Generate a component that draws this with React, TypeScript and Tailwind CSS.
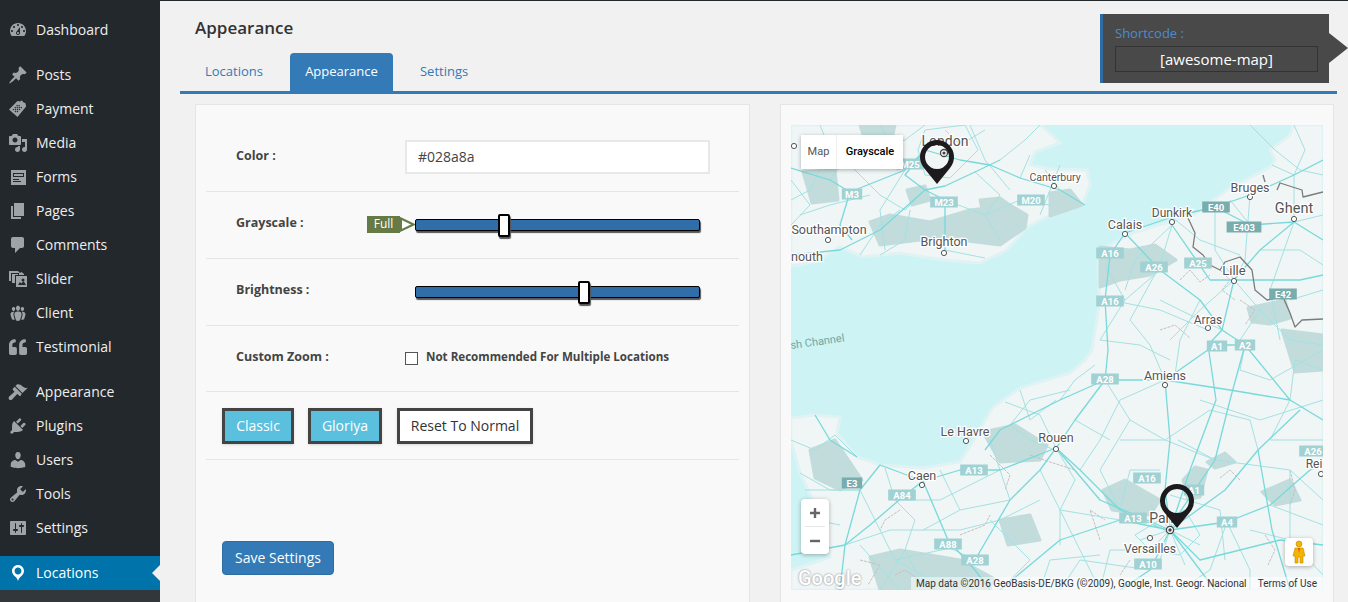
import { FaQuoteLeft } from "react-icons/fa";

type IconProps = { className?: string };

const icon = (d: string) =>
  function Icon({ className = "" }: IconProps) {
    return (
      <svg viewBox="0 0 20 20" className={`h-5 w-5 fill-current ${className}`}>
        <path fillRule="evenodd" d={d} />
      </svg>
    );
  };

const DashboardIcon = icon(
  "M3.76 16h12.48c1.1-1.37 1.76-3.11 1.76-5 0-4.42-3.58-8-8-8s-8 3.58-8 8c0 1.89.66 3.63 1.76 5zM10 4c.55 0 1 .45 1 1s-.45 1-1 1-1-.45-1-1 .45-1 1-1zM6 6c.55 0 1 .45 1 1s-.45 1-1 1-1-.45-1-1 .45-1 1-1zm8 0c.55 0 1 .45 1 1s-.45 1-1 1-1-.45-1-1 .45-1 1-1zm-5.37 5.55L12 7v6c0 1.1-.9 2-2 2s-2-.9-2-2c0-.57.24-1.08.63-1.45zM4 10c.55 0 1 .45 1 1s-.45 1-1 1-1-.45-1-1 .45-1 1-1zm12 0c.55 0 1 .45 1 1s-.45 1-1 1-1-.45-1-1 .45-1 1-1zm-5 3c0-.55-.45-1-1-1s-1 .45-1 1 .45 1 1 1 1-.45 1-1z",
);
const PostsIcon = icon(
  "M10.44 3.02l1.82-1.82 6.36 6.35-1.83 1.82c-1.05-.68-2.48-.57-3.41.36l-.75.75c-.92.93-1.04 2.35-.35 3.41l-1.83 1.82-2.41-2.41-2.8 2.79c-.42.42-3.38 2.71-3.8 2.29s1.86-3.39 2.28-3.81l2.79-2.79L4.1 9.36l1.83-1.82c1.05.69 2.48.57 3.4-.36l.75-.75c.93-.92 1.05-2.35.36-3.41z",
);
const PaymentIcon = icon(
  "M1 10.5 9.5 2l3 .4.6-.9 1.6.4.2 1.1 2.6 1.2.6 3.3L9.5 18zM8.2 6.6l.9-.9.9.9-.9.9zm2 0 .9-.9.9.9-.9.9zM6.4 8.6l.9-.9.9.9-.9.9zm2 0 .9-.9.9.9-.9.9zm2 0 .9-.9.9.9-.9.9zm2 0 .9-.9.9.9-.9.9zM4.6 10.6l.9-.9.9.9-.9.9zm2 0 .9-.9.9.9-.9.9zm2 0 .9-.9.9.9-.9.9zm2 0 .9-.9.9.9-.9.9zm-4 2 .9-.9.9.9-.9.9zm2 0 .9-.9.9.9-.9.9z",
);
const MediaIcon = icon(
  "M13 11V4c0-.55-.45-1-1-1h-1.67L9 1H5L3.67 3H2c-.55 0-1 .45-1 1v7c0 .55.45 1 1 1h10c.55 0 1-.45 1-1zM7 4.5c1.38 0 2.5 1.12 2.5 2.5S8.38 9.5 7 9.5 4.5 8.38 4.5 7 5.62 4.5 7 4.5zM14 6h5v10.5c0 1.38-1.12 2.5-2.5 2.5S14 17.88 14 16.5s1.12-2.5 2.5-2.5c.17 0 .34.02.5.05V9h-3V6zm-4 8.05V13h2v3.5c0 1.38-1.12 2.5-2.5 2.5S7 17.88 7 16.5 8.12 14 9.5 14c.17 0 .34.02.5.05z",
);
const FormsIcon = icon(
  "M3 3h15v15H3zM5 6v4h11V6zm1 1h9v2H6zM5 12v1h6v-1zm0 2v1h8v-1z",
);
const PagesIcon = icon("M6 15V2h10v13H6zm-1 1h8v2H3V5h2v11z");
const CommentsIcon = icon(
  "M5 2h9c1.1 0 2 .9 2 2v7c0 1.1-.9 2-2 2h-2l-5 5v-5H5c-1.1 0-2-.9-2-2V4c0-1.1.9-2 2-2z",
);
const SliderIcon = icon(
  "M1 2h9l2 2 1.5-1L16 5v1h-5V4H3v8H1zm3 3h6v1H7v8H4zm4 2h11v11H8zm2 9h8l-2.5-4-2 2.5-1.5-1.5zm5-6.5a1.5 1.5 0 1 0 0 3 1.5 1.5 0 0 0 0-3z",
);
const ClientIcon = icon(
  "M8.03 4.46c-.29 1.28.55 3.46 1.97 3.46 1.41 0 2.25-2.18 1.96-3.46-.22-.98-1.08-1.63-1.96-1.63-.89 0-1.74.65-1.97 1.63zm-4.13.9c-.25 1.08.47 2.93 1.66 2.93 1.2 0 1.92-1.85 1.67-2.93-.19-.83-.92-1.39-1.67-1.39s-1.48.56-1.66 1.39zm8.86 0c-.25 1.08.47 2.93 1.66 2.93 1.2 0 1.92-1.85 1.66-2.93-.19-.83-.92-1.39-1.66-1.39-.75 0-1.48.56-1.66 1.39zm-.59 11.43l1.25-4.3C14.2 10 12.71 8.47 10 8.47c-2.72 0-4.21 1.53-3.44 4.02l1.26 4.3C8.05 17.51 9 18 10 18c.98 0 1.94-.49 2.17-1.21zm-6.1-7.63c-.49.67-.96 1.83-.42 3.59l1.12 3.79c-.34.2-.77.31-1.2.31-.85 0-1.65-.41-1.85-1.03l-1.07-3.65c-.65-2.11.61-3.4 2.92-3.4.27 0 .54.02.79.06-.1.1-.2.22-.29.33zm8.35-.39c2.31 0 3.58 1.29 2.92 3.4l-1.07 3.65c-.2.62-1 1.03-1.85 1.03-.43 0-.86-.11-1.2-.31l1.11-3.77c.55-1.78.08-2.94-.42-3.61-.08-.11-.18-.23-.28-.33.25-.04.51-.06.79-.06z",
);
const AppearanceIcon = icon(
  "M14.48 11.06L7.41 3.99l1.5-1.5c.5-.56 2.3-.47 3.51.32 1.21.8 1.43 1.28 2.91 2.1 1.18.64 2.45 1.26 4.45.85zm-.71.71L6.7 4.7 4.93 6.47c-.39.39-.39 1.02 0 1.41l1.06 1.06c.39.39.39 1.03 0 1.42L1.2 14.5c-.8.8-.8 2.1 0 2.9s2.1.8 2.9 0l4.6-4.8c.39-.39 1.03-.39 1.42 0l1.06 1.06c.39.39 1.02.39 1.41 0z",
);
const PluginsIcon = icon(
  "M13.11 4.36L9.87 7.6 8 5.73l3.24-3.24c.35-.34 1.05-.2 1.56.32.52.51.66 1.21.31 1.55zm-8 1.77l.91-1.12 9.01 9.01-1.19.84c-.71.71-2.63 1.16-3.82 1.16H6.14L4.9 17.26c-.59.59-1.54.59-2.12 0-.59-.58-.59-1.53 0-2.12l1.24-1.24v-3.88c0-1.13.4-3.19 1.09-3.89zm7.26 3.97l3.24-3.24c.34-.35 1.04-.21 1.55.31.52.51.66 1.21.31 1.55l-3.24 3.25z",
);
const UsersIcon = icon(
  "M10 9.25c-2.27 0-2.73-3.44-2.73-3.44C7 4.02 7.82 2 9.97 2c2.16 0 2.98 2.02 2.71 3.81 0 0-.41 3.44-2.68 3.44zm0 2.57L12.72 10c2.39 0 4.52 2.33 4.52 4.53v2.49s-3.65 1.13-7.24 1.13c-3.65 0-7.24-1.13-7.24-1.13v-2.49c0-2.25 1.94-4.48 4.47-4.48z",
);
const ToolsIcon = icon(
  "M16.68 9.77c-1.34 1.34-3.3 1.67-4.95.99l-5.41 6.52c-.99.99-2.59.99-3.58 0s-.99-2.59 0-3.57l6.52-5.42c-.68-1.65-.35-3.61.99-4.95 1.28-1.28 3.12-1.62 4.72-1.06l-2.89 2.89 2.82 2.82 2.86-2.87c.53 1.58.18 3.39-1.08 4.65zM3.81 16.21c.4.39 1.04.39 1.43 0 .4-.4.4-1.04 0-1.43-.39-.4-1.03-.4-1.43 0-.39.39-.39 1.03 0 1.43z",
);
const SettingsIcon = icon(
  "M18 16V4c0-.55-.45-1-1-1H3c-.55 0-1 .45-1 1v12c0 .55.45 1 1 1h14c.55 0 1-.45 1-1zM8 11h1c.55 0 1 .45 1 1s-.45 1-1 1H8v1.5c0 .28-.22.5-.5.5s-.5-.22-.5-.5V13H6c-.55 0-1-.45-1-1s.45-1 1-1h1V5.5c0-.28.22-.5.5-.5s.5.22.5.5V11zm5-2h-1c-.55 0-1-.45-1-1s.45-1 1-1h1V5.5c0-.28.22-.5.5-.5s.5.22.5.5V7h1c.55 0 1 .45 1 1s-.45 1-1 1h-1v5.5c0 .28-.22.5-.5.5s-.5-.22-.5-.5V9z",
);
const LocationIcon = icon(
  "M10 2C6.69 2 4 4.69 4 8c0 2.02 1.17 3.71 2.53 4.89.43.37 1.18.96 1.85 1.83.74.97 1.24 2.21 1.62 3.28.38-1.07.88-2.31 1.62-3.28.67-.87 1.42-1.46 1.85-1.83C14.83 11.71 16 10.02 16 8c0-3.31-2.69-6-6-6zm0 2.56c1.9 0 3.44 1.54 3.44 3.44S11.9 11.44 10 11.44 6.56 9.9 6.56 8 8.1 4.56 10 4.56z",
);
const QuoteIcon = ({ className = "" }: IconProps) => <FaQuoteLeft className={`h-[18px] w-[20px] ${className}`} />;

const menuGroups = [
  [{ label: "Dashboard", Icon: DashboardIcon }],
  [
    { label: "Posts", Icon: PostsIcon },
    { label: "Payment", Icon: PaymentIcon },
    { label: "Media", Icon: MediaIcon },
    { label: "Forms", Icon: FormsIcon },
    { label: "Pages", Icon: PagesIcon },
    { label: "Comments", Icon: CommentsIcon },
    { label: "Slider", Icon: SliderIcon },
    { label: "Client", Icon: ClientIcon },
    { label: "Testimonial", Icon: QuoteIcon },
  ],
  [
    { label: "Appearance", Icon: AppearanceIcon },
    { label: "Plugins", Icon: PluginsIcon },
    { label: "Users", Icon: UsersIcon },
    { label: "Tools", Icon: ToolsIcon },
    { label: "Settings", Icon: SettingsIcon },
  ],
];

function Sidebar() {
  return (
    <aside className="flex w-40 shrink-0 flex-col gap-[11px] bg-[#23282d] pt-[13px] text-sm text-[#eeeeee]">
      {menuGroups.map((group, i) => (
        <ul key={i}>
          {group.map(({ label, Icon }) => (
            <li key={label} className="flex h-[34px] items-center gap-2 pl-2">
              <Icon className="text-[#9ea3a8]" />
              <span>{label}</span>
            </li>
          ))}
        </ul>
      ))}
      <div className="relative flex h-[34px] items-center gap-2 bg-[#0073aa] pl-2 text-white">
        <LocationIcon className="text-white" />
        <span>Locations</span>
        <span className="absolute right-0 top-[9px] border-y-8 border-r-8 border-y-transparent border-r-[#f1f1f1]" />
      </div>
      <div className="-mt-[11px] flex-1 bg-[#32373c]" />
    </aside>
  );
}

function Slider({ value, tip }: { value: number; tip?: string }) {
  return (
    <div className="relative ml-[179px] h-3 w-[285px] rounded-[2px] border border-black bg-[#2f6ea8] shadow-[1px_2px_1px_#555]">
      <div
        className="absolute -top-[6px] h-[23px] w-3 -translate-x-1/2 rounded-[2px] border-2 border-black bg-white shadow-[1px_2px_1px_#555]"
        style={{ left: `${value}%` }}
      />
      {tip && (
        <div className="absolute -left-[49px] -top-[4px] flex h-[17px] w-[33px] items-center justify-center bg-[#667a45] text-xs text-white">
          {tip}
          <svg viewBox="0 0 15 15" className="absolute -right-[15px] top-[1px] h-[15px] w-[15px]">
            <path d="M1 1.5 13.5 7.5 1 13.5z" fill="#fff" stroke="#667a45" strokeWidth="2" />
          </svg>
        </div>
      )}
    </div>
  );
}

function Row({
  label,
  labelClass,
  children,
  height,
}: {
  label: string;
  labelClass: string;
  children: React.ReactNode;
  height: string;
}) {
  return (
    <div className={`relative flex items-center border-b border-[#e5e5e5] pl-[30px] ${height}`}>
      <label className={`absolute text-[12.5px] font-bold text-[#444444] ${labelClass}`}>{label}</label>
      {children}
    </div>
  );
}

function SettingsPanel() {
  return (
    <section className="border border-[#e5e5e5] bg-[#f9f9f9] px-[10px] pt-[10px]">
      <Row label="Color :" labelClass="mt-[6px]" height="h-[77px]">
        <div className="ml-[169px] mt-[8px] flex h-[34px] w-[305px] items-center border-2 border-[#e8e8e8] bg-white pl-[11px] text-sm text-[#444444]">
          #028a8a
        </div>
      </Row>
      <Row label="Grayscale :" labelClass="mb-[4px]" height="h-[67px]">
        <div className="-mt-[1px]">
          <Slider value={31} tip="Full" />
        </div>
      </Row>
      <Row label="Brightness :" labelClass="mb-[4px]" height="h-[67px]">
        <div className="-mt-[1px]">
          <Slider value={59.5} />
        </div>
      </Row>
      <Row label="Custom Zoom :" labelClass="mb-[2px]" height="h-[66px]">
        <div className="ml-[169px] -mt-[3px] flex items-center gap-2">
          <span className="mt-1 h-[13px] w-[13px] border border-[#555555] bg-white" />
          <span className="text-[11.6px] font-bold text-[#444444]">Not Recommended For Multiple Locations</span>
        </div>
      </Row>
      <div className="flex h-[68px] items-center gap-[14px] border-b border-[#e5e5e5] pl-4 text-sm">
        <button className="h-9 w-[72px] border-[3px] border-[#444444] bg-[#5bc0de] text-white shadow-sm">Classic</button>
        <button className="h-9 w-[74px] border-[3px] border-[#444444] bg-[#5bc0de] text-white shadow-sm">Gloriya</button>
        <button className="ml-px h-9 w-[136px] border-[3px] border-[#444444] bg-white text-[#333333] shadow-sm">
          Reset To Normal
        </button>
      </div>
      <div className="pb-[60px] pl-4 pt-[81px]">
        <button className="h-[34px] w-28 rounded border border-[#2e6da4] bg-[#337ab7] text-sm text-white">
          Save Settings
        </button>
      </div>
    </section>
  );
}

const land = [
  "M791,125 L1040,125 L1052,135 L1060,143 L1035,152 L1030,165 L1050,169 L1087,170 L1090,185 L1083,203 L1070,210 L1047,217 L1027,227 L1007,250 L980,263 L943,260 L900,253 L863,257 L840,247 L815,262 L791,266 Z",
  "M1293,125 L1290,135 L1270,150 L1275,160 L1270,167 L1227,190 L1193,215 L1133,233 L1100,250 L1098,267 L1100,300 L1092,350 L1085,360 L1070,373 L1020,388 L993,407 L985,420 L977,435 L960,462 L923,468 L880,465 L857,457 L837,433 L840,417 L813,415 L791,418 L791,440 L800,473 L813,500 L830,557 L813,563 L791,570 L791,590 L1323,590 L1323,125 Z",
];

const forests = [
  "M870,222 L890,215 L930,222 L970,210 L1010,205 L1027,215 L1025,228 L1000,245 L960,240 L920,240 L880,245 Z",
  "M803,172 L835,170 L838,200 L812,203 Z",
  "M860,125 L895,125 L890,148 L868,150 Z",
  "M907,190 L925,186 L930,200 L912,205 Z",
  "M980,200 L1000,198 L1024,215 L1010,232 L985,222 Z",
  "M1050,193 L1070,190 L1082,205 L1068,210 L1050,216 Z",
  "M1100,247 L1130,250 L1155,245 L1176,260 L1150,275 L1120,280 L1100,287 Z",
  "M1248,308 L1285,300 L1290,318 L1270,324 L1252,322 Z",
  "M1282,330 L1323,335 L1323,370 L1295,372 Z",
  "M810,450 L835,440 L862,480 L840,490 L815,478 Z",
  "M983,432 L1015,425 L1047,445 L1040,460 L1000,462 Z",
  "M870,557 L900,550 L960,560 L993,578 L990,590 L880,590 Z",
  "M1103,490 L1125,480 L1160,500 L1150,515 L1112,510 Z",
  "M1183,480 L1195,467 L1207,470 L1200,497 L1188,500 Z",
  "M1207,462 L1225,453 L1235,462 L1215,468 Z",
  "M1262,492 L1290,480 L1300,500 L1275,505 Z",
  "M1000,520 L1030,515 L1040,540 L1008,545 Z",
];

const mainRoads = [
  "791,168 830,180 850,192 905,170 925,150 960,160 990,165 1020,178 1060,190 1085,205",
  "850,192 840,225 852,240",
  "791,255 840,250 880,230 925,190 945,200 945,250",
  "925,150 905,175 925,190 945,186 975,172 1000,160",
  "1125,233 1110,255 1105,300 1108,350 1105,380 1075,420 1055,450",
  "1125,233 1160,270 1200,300 1222,330 1245,345 1290,400 1323,420",
  "1172,225 1210,280 1234,280",
  "1125,233 1172,217 1215,207 1250,195 1294,175 1323,160",
  "1215,207 1250,225 1294,222 1323,240",
  "1234,280 1260,250 1294,222",
  "1234,280 1300,280 1323,275",
  "1234,280 1222,330 1208,345 1216,400 1190,470 1170,530",
  "1245,345 1230,400 1215,460 1178,515",
  "1165,380 1170,440 1165,490 1170,525",
  "1165,380 1105,380 1060,400 1020,420 1000,430 985,450",
  "1165,380 1215,345 1245,345",
  "1165,380 1230,390 1290,400",
  "1056,448 1080,470 1120,510 1165,530",
  "1056,448 1000,470 960,470 923,481",
  "923,481 905,495 870,525 845,545 791,555",
  "923,481 948,540 975,570 990,590",
  "975,560 1010,500 1040,470 1056,448",
  "923,481 880,465 860,490 845,545 840,590",
  "857,457 830,440 815,415",
  "1170,530 1227,522 1270,505 1310,470",
  "1170,530 1225,490 1258,450 1300,410",
  "1170,530 1150,570 1120,590",
  "1170,530 1215,590",
  "1170,530 1120,520 1060,540 1000,590",
  "1170,530 1100,500 1056,448",
  "1258,450 1272,530 1290,590",
  "1310,470 1323,465",
  "1170,530 1200,560 1280,540 1323,545",
];

const thinRoads = [
  "820,125 830,150 810,190 791,200",
  "880,125 905,170",
  "910,210 905,240 880,255",
  "970,125 985,160 1010,190",
  "925,130 965,125 978,150 950,178 925,175 918,150 925,130",
  "800,215 830,205 870,195",
  "1060,165 1050,190 1040,215",
  "1250,125 1275,150 1300,170 1323,175",
  "1294,125 1305,150 1294,175 1294,222 1270,290 1280,340",
  "1172,225 1160,265 1130,320 1150,345 1165,380",
  "1110,300 1160,310 1208,330",
  "1250,195 1245,260 1234,280",
  "1172,217 1200,240 1240,255",
  "1105,265 1125,300 1100,340",
  "1234,280 1200,310 1170,340",
  "1290,300 1323,290",
  "1245,345 1240,370 1270,380 1323,350",
  "1100,340 1140,345 1170,360",
  "1060,400 1075,380 1095,365",
  "1005,402 1040,415 1056,448",
  "1020,390 1030,420 1056,400",
  "1056,448 1075,480 1060,510 1060,545",
  "1000,470 1010,500 960,510 923,530",
  "1000,470 990,440",
  "860,490 880,530 895,560 950,590",
  "885,468 895,500 915,520 905,550 880,590",
  "800,473 830,490 860,490",
  "791,440 815,450 835,435 857,457",
  "845,545 890,530 960,530 1000,520",
  "895,560 950,548 975,560",
  "1120,440 1165,440 1215,460",
  "1080,470 1100,440 1120,400 1165,380",
  "1120,510 1130,470 1160,470",
  "1200,400 1260,420 1323,400",
  "1215,460 1290,470 1323,500",
  "1227,522 1250,570 1250,590",
  "1100,590 1110,550 1150,550 1170,530",
  "1040,590 1050,560 1100,555",
  "1270,505 1323,525",
  "1170,495 1220,510 1225,560",
  "1135,535 1160,520 1185,510 1200,535 1180,555 1150,550 1135,535",
  "791,180 810,205 791,225",
  "830,180 845,160 870,150 905,140",
  "905,140 925,125",
  "845,160 880,195 905,210 925,190",
  "860,255 880,225 900,210",
  "945,200 985,215 1000,240",
  "985,215 1020,200 1050,205",
  "975,172 1000,195 985,215",
  "1020,178 1030,155",
  "1060,190 1045,170",
  "1000,160 1025,140 1040,125",
  "945,130 960,145 985,130",
  "905,170 880,210 885,250",
  "945,250 985,258",
  "1250,225 1230,200",
  "1294,222 1323,215",
  "1294,175 1272,165",
  "1260,250 1300,250 1323,265",
  "1234,280 1215,250 1215,207",
  "1172,225 1135,260 1125,290",
  "1160,270 1125,300",
  "1200,300 1180,340 1175,375",
  "1234,280 1260,310 1290,340 1323,345",
  "1260,310 1240,340",
  "1222,330 1180,310 1160,300",
  "1290,400 1295,360 1323,370",
  "1290,400 1270,440 1323,440",
  "1055,450 1030,440 1010,425 1030,400 1070,390",
  "1105,380 1130,420 1165,440",
  "1165,440 1210,410 1250,420",
  "1250,420 1258,450",
  "1130,420 1100,470 1120,510",
  "1075,420 1110,440",
  "1215,460 1178,440",
  "1290,470 1290,540 1323,575",
  "1250,530 1290,540",
  "1227,522 1210,570 1180,590",
  "1150,570 1080,560 1060,590",
  "1060,510 1120,520",
  "1040,470 1060,510 1100,590",
  "990,520 1030,560 1000,590",
  "960,510 940,470",
  "905,550 925,590",
  "860,490 805,490",
  "840,525 815,520",
  "895,500 940,500 1000,470",
  "1000,520 1040,500",
  "860,545 900,590",
  "1150,505 1170,530 1190,505",
  "1140,540 1170,530 1200,545",
  "1160,560 1170,530 1185,565",
];

const minorRoads = [
  "1220,270 1230,280 1222,290 1235,300",
  "1180,280 1190,270 1200,282 1210,275",
  "1160,330 1175,325 1190,338",
  "1240,300 1255,310 1245,325",
  "900,510 885,520 880,530",
  "960,535 985,525 990,515",
  "990,455 1010,475 1005,490",
  "1030,455 1050,462 1075,470",
  "1100,540 1090,510 1105,520",
  "1130,560 1120,575",
  "1240,480 1230,470 1220,478",
  "1265,535 1275,550 1268,565",
  "1290,470 1295,490 1290,505",
  "860,560 880,565 868,585",
  "895,575 905,570 935,590",
];

const borders = [
  "1188,218 1195,233 1193,247 1203,255 1210,265 1220,270 1225,262 1240,257 1252,270 1255,290 1267,300 1283,297 1290,313 1295,327 1302,320 1323,319",
  "1263,175 1265,182",
  "1277,190 1280,183 1302,190 1303,197 1323,192",
];

const shields = [
  ["M3", 852, 194, 0], ["M25", 910, 164, 0], ["M23", 944, 202, 0], ["M20", 1031, 200, 0],
  ["E40", 1216, 207, 1], ["E403", 1244, 227, 1], ["A16", 1110, 253, 0], ["A26", 1154, 267, 0],
  ["A25", 1198, 263, 0], ["A16", 1110, 301, 0], ["E42", 1283, 294, 1], ["A1", 1217, 346, 0],
  ["A2", 1245, 345, 0], ["A28", 1105, 379, 0], ["A13", 974, 470, 0], ["E3", 852, 483, 1],
  ["A84", 902, 495, 0], ["A88", 948, 544, 0], ["A28", 975, 560, 0], ["A16", 1147, 478, 0],
  ["A13", 1133, 518, 0], ["A4", 1227, 522, 0], ["A10", 1148, 564, 0], ["A26", 1313, 451, 0],
  ["A1", 1194, 490, 0],
] as const;

const places = [
  ["London", 945, 146, 14], ["Canterbury", 1055, 181, 10.5], ["Southampton", 829, 234, 12.5],
  ["nouth", 807, 261, 12.5], ["Brighton", 944, 246, 12.5], ["Bruges", 1250, 192, 12.5],
  ["Dunkirk", 1172, 217, 12], ["Ghent", 1294, 213, 14.5], ["Calais", 1125, 229, 12.5],
  ["Lille", 1234, 275, 13], ["Arras", 1208, 324, 12], ["Amiens", 1165, 380, 12.5],
  ["Le Havre", 965, 436, 12.5], ["Rouen", 1056, 442, 12.5], ["Caen", 922, 480, 12.5],
  ["Paris", 1165, 523, 14], ["Versailles", 1150, 553, 12], ["Rei", 1314, 468, 12],
] as const;

const dots = [
  [794, 146], [828, 240], [944, 253], [1054, 186], [1250, 197], [1172, 222], [1294, 219],
  [1125, 234], [1234, 281], [1208, 328], [1165, 385], [966, 441], [1056, 449], [922, 485],
  [1150, 538], [1321, 474],
];

function Pin({ x, y }: { x: number; y: number }) {
  return (
    <path
      fill="#1d1a1d"
      fillRule="evenodd"
      d={`M${x},${y} L${x - 13},${y - 16} A17,17 0 1 1 ${x + 13},${y - 16} Z M${x},${y - 39} a12,12 0 1 0 0.01,0 Z`}
    />
  );
}

function MapCanvas() {
  return (
    <svg viewBox="791 125 532 465" className="absolute inset-0 h-full w-full">
      <rect x="791" y="125" width="532" height="465" fill="#cef3f4" />
      {land.map((d, i) => (
        <path key={i} d={d} fill="#f0f5f6" stroke="#e0f3f4" strokeWidth="3" />
      ))}
      {forests.map((d, i) => (
        <path key={i} d={d} fill="#c2dcdc" strokeLinejoin="round" stroke="#c2dcdc" strokeWidth="3" />
      ))}
      {minorRoads.map((p, i) => (
        <polyline key={i} points={p} fill="none" stroke="#c8bfbf" strokeWidth="1" strokeDasharray="3 1" />
      ))}
      {thinRoads.map((p, i) => (
        <polyline key={i} points={p} fill="none" stroke="#a4e1e2" strokeWidth="1" strokeLinejoin="round" />
      ))}
      {mainRoads.map((p, i) => (
        <polyline key={i} points={p} fill="none" stroke="#78d9da" strokeWidth="1.3" strokeLinejoin="round" />
      ))}
      {borders.map((p, i) => (
        <polyline key={i} points={p} fill="none" stroke="#7b7b7b" strokeWidth="1.3" strokeLinejoin="round" />
      ))}
      <g fontFamily="Roboto, sans-serif">
        <text x="791" y="349" fontSize="11" fill="#6fa7a8" transform="rotate(-8 791 349)">
          sh Channel
        </text>
        {shields.map(([t, x, y, dark]) => (
          <g key={`${t}${x}`}>
            <rect x={x - (t.length * 3.6 + 3)} y={y - 5.5} width={t.length * 7.2 + 6} height="11" fill={dark ? "#79acad" : "#a0d2d3"} />
            <text x={x} y={y + 3.5} textAnchor="middle" fontSize="9.5" fontWeight="700" fill="#ffffff">
              {t}
            </text>
          </g>
        ))}
        {dots.map(([x, y]) => (
          <circle key={`${x}${y}`} cx={x} cy={y} r="2.6" fill="#ffffff" stroke="#555555" strokeWidth="1" />
        ))}
        {places.map(([t, x, y, size]) => (
          <text
            key={t}
            x={x}
            y={y}
            textAnchor="middle"
            fontSize={size}
            fill="#555555"
            stroke="#ffffff"
            strokeWidth="2.5"
            paintOrder="stroke"
          >
            {t}
          </text>
        ))}
      </g>
      <circle cx="944" cy="153" r="3.5" fill="#fff" stroke="#444" strokeWidth="1.3" />
      <circle cx="944" cy="153" r="1.6" fill="#444" />
      <circle cx="1170" cy="530" r="3.6" fill="#fff" stroke="#444" strokeWidth="1.3" />
      <circle cx="1170" cy="530" r="1.7" fill="#444" />
      <Pin x={937} y={184} />
      <Pin x={1177} y={528} />
    </svg>
  );
}

function MapPanel() {
  return (
    <section className="border border-[#e5e5e5] bg-[#f9f9f9] pb-[60px] pl-[10px] pr-[10px] pt-5">
      <div className="relative h-[465px] w-[532px] overflow-hidden font-['Roboto',sans-serif]">
        <MapCanvas />
        <div className="absolute left-[10px] top-[10px] flex h-[34px] bg-white text-[11px] shadow-[0_1px_4px_rgba(0,0,0,0.3)]">
          <span className="flex w-[36px] items-center justify-center border-r border-[#eeeeee] text-[#565656]">Map</span>
          <span className="flex w-[66px] items-center justify-center font-medium text-black">Grayscale</span>
        </div>
        <div className="absolute left-[10px] top-[374px] flex h-[55px] w-[28px] flex-col items-center rounded-sm bg-white text-[#666666] shadow-[0_1px_4px_rgba(0,0,0,0.3)]">
          <svg viewBox="0 0 28 27" className="h-[27px] w-7">
            <path d="M9 14h10M14 9v10" stroke="#666666" strokeWidth="2.4" />
          </svg>
          <div className="h-px w-5 bg-[#e6e6e6]" />
          <svg viewBox="0 0 28 27" className="h-[27px] w-7">
            <path d="M9 14h10" stroke="#666666" strokeWidth="2.4" />
          </svg>
        </div>
        <div className="absolute bottom-[2px] left-[7px] text-[20px] font-medium leading-none text-white [text-shadow:0_0_2px_#777]">
          Google
        </div>
        <div className="absolute right-[10px] top-[413px] flex h-7 w-7 items-center justify-center rounded-sm bg-white shadow-[0_1px_4px_rgba(0,0,0,0.3)]">
          <svg viewBox="0 0 14 24" className="h-6 w-[14px]">
            <circle cx="7" cy="4" r="3" fill="#f5b400" stroke="#b98a00" strokeWidth=".6" />
            <path d="M3 8h8l2 8h-2v7H8v-6H6v6H3v-7H1z" fill="#f5b400" stroke="#b98a00" strokeWidth=".6" />
            <path d="M6 8h2l-1 5z" fill="#d9531e" />
          </svg>
        </div>
        <div className="absolute bottom-0 right-0 flex h-[13px] w-[412px] items-center justify-between bg-white/50 pl-[5px] pr-[6px] text-[10px] text-[#333333]">
          <span className="whitespace-nowrap">Map data ©2016 GeoBasis-DE/BKG (©2009), Google, Inst. Geogr. Nacional</span>
          <span className="whitespace-nowrap">Terms of Use</span>
        </div>
      </div>
    </section>
  );
}

export default function App() {
  return (
    <div className="flex h-[602px] w-[1348px] overflow-hidden bg-[#f1f1f1] font-['Open_Sans',sans-serif]">
      <Sidebar />
      <main className="min-w-0 flex-1 border-t border-[#23282d] pl-5">
        <header className="flex h-[93px] w-[1157px] justify-between border-b-[3px] border-[#337ab7] pl-[15px]">
          <div className="flex flex-col">
            <h1 className="mt-[17px] h-[35px] text-[17px] font-semibold leading-5 text-[#333333]">Appearance</h1>
            <nav className="flex text-[13px] text-[#337ab7]">
              <span className="flex h-[38px] items-center pl-[10px] pr-[27px]">Locations</span>
              <span className="flex h-[38px] w-[103px] items-center justify-center rounded-t bg-[#337ab7] text-white">
                Appearance
              </span>
              <span className="flex h-[38px] items-center pl-[27px]">Settings</span>
            </nav>
          </div>
          <div className="relative mr-2 mt-[13px] h-[69px] w-[229px] border-l-[3px] border-[#2e6da4] bg-[#494949] pl-3 pt-[11px]">
            <div className="text-[13px] leading-4 text-[#4a8cd0]">Shortcode :</div>
            <div className="mt-[5px] flex h-[26px] w-[203px] items-center justify-center border border-[#333333] text-[15px] text-white">
              [awesome-map]
            </div>
            <span className="absolute -right-[19px] top-[19px] border-y-[15px] border-l-[19px] border-y-transparent border-l-[#494949]" />
          </div>
        </header>
        <div className="mt-[10px] grid w-[1139px] grid-cols-[555px_554px] gap-[30px] pl-[15px]">
          <SettingsPanel />
          <MapPanel />
        </div>
      </main>
    </div>
  );
}
